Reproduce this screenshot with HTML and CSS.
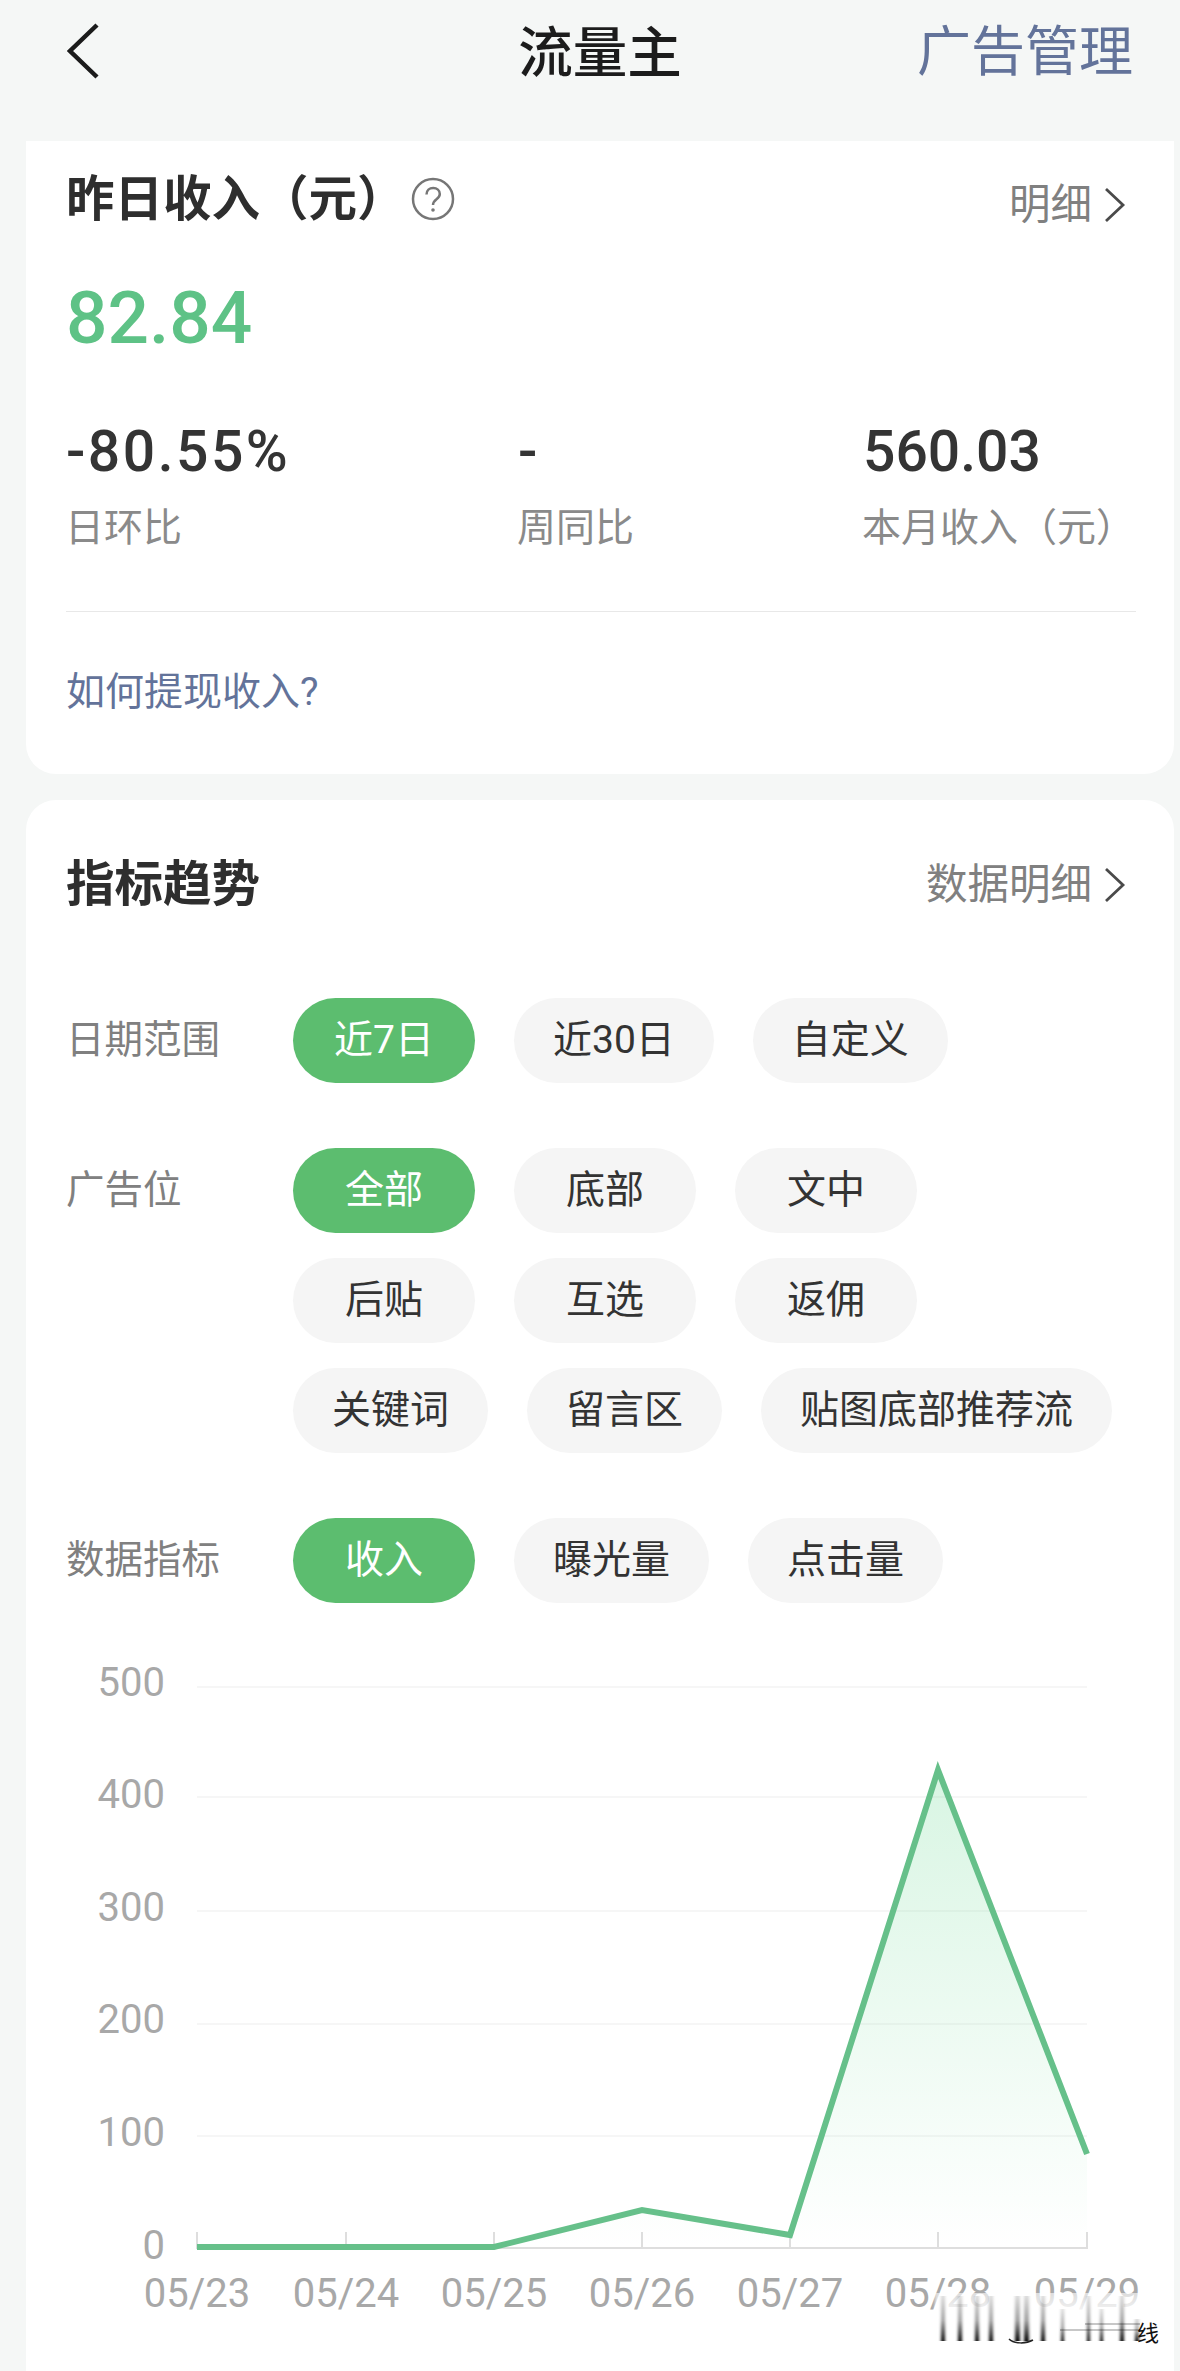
FILE: index.html
```html
<!DOCTYPE html>
<html lang="zh-CN">
<head>
<meta charset="utf-8">
<title>流量主</title>
<link rel="stylesheet" href="styles.css">
</head>
<body>
<header class="topbar">
  <svg class="back" viewBox="0 0 34 58" aria-hidden="true"><path d="M30 3 3 29l27 26"/></svg>
  <h1 class="title">流量主</h1>
  <a class="manage">广告管理</a>
</header>

<section class="card card-income">
  <div class="head-row">
    <div class="head-left">
      <h2 class="heading">昨日收入（元）</h2>
      <svg class="help" viewBox="0 0 44 44" aria-hidden="true">
        <circle cx="22" cy="22" r="20"/>
        <path d="M15.5 17.5c0-4 3-6.5 6.700-6.500s6.600 2.500 6.600 6c0 5.500-6.800 5-6.800 11"/>
        <circle class="dot" cx="22" cy="33" r="1.800"/>
      </svg>
    </div>
    <a class="more more-low">明细<svg class="chev" viewBox="0 0 22 36" aria-hidden="true"><path d="M2 2l17 16L2 34"/></svg></a>
  </div>
  <div class="amount">82.84</div>
  <div class="stats">
    <div class="stat"><div class="stat-num stat-wide">-80.55%</div><div class="stat-label">日环比</div></div>
    <div class="stat"><div class="stat-num">-</div><div class="stat-label">周同比</div></div>
    <div class="stat"><div class="stat-num">560.03</div><div class="stat-label">本月收入（元）</div></div>
  </div>
  <hr class="divider">
  <a class="link">如何提现收入?</a>
</section>

<section class="card card-trend">
  <div class="trend-top">
    <div class="head-row">
      <h2 class="heading">指标趋势</h2>
      <a class="more">数据明细<svg class="chev" viewBox="0 0 22 36" aria-hidden="true"><path d="M2 2l17 16L2 34"/></svg></a>
    </div>
    <div class="filters">
      <div class="filter">
        <div class="filter-label">日期范围</div>
        <div class="pills"><span class="pill on">近7日</span><span class="pill">近30日</span><span class="pill">自定义</span></div>
      </div>
      <div class="filter">
        <div class="filter-label">广告位</div>
        <div class="pills"><span class="pill on">全部</span><span class="pill">底部</span><span class="pill">文中</span><span class="pill">后贴</span><span class="pill">互选</span><span class="pill">返佣</span><span class="pill">关键词</span><span class="pill">留言区</span><span class="pill">贴图底部推荐流</span></div>
      </div>
      <div class="filter">
        <div class="filter-label">数据指标</div>
        <div class="pills"><span class="pill on">收入</span><span class="pill">曝光量</span><span class="pill">点击量</span></div>
      </div>
    </div>
  </div>

  <svg class="chart" viewBox="26 1650 1148 721">
    <defs>
      <linearGradient id="area" x1="0" y1="1771" x2="0" y2="2249" gradientUnits="userSpaceOnUse">
        <stop offset="0" stop-color="#5ed68a" stop-opacity=".24"/>
        <stop offset="1" stop-color="#5ed68a" stop-opacity="0"/>
      </linearGradient>
      <linearGradient id="smear" x1="0" y1="0" x2="0" y2="1">
        <stop offset="0" stop-color="#000" stop-opacity=".14"/>
        <stop offset=".55" stop-color="#000" stop-opacity=".38"/>
        <stop offset="1" stop-color="#000" stop-opacity="1"/>
      </linearGradient>
      <linearGradient id="fade" x1="0" y1="0" x2="0" y2="1">
        <stop offset="0" stop-color="#fff" stop-opacity=".6"/>
        <stop offset="1" stop-color="#fff" stop-opacity=".95"/>
      </linearGradient>
      <filter id="soft" x="-50%" y="-10%" width="200%" height="120%"><feGaussianBlur stdDeviation="1.600 .6"/></filter>
    </defs>
    <g class="grid">
      <line x1="197" y1="1688" x2="1087" y2="1688"/>
      <line x1="197" y1="1798" x2="1087" y2="1798"/>
      <line x1="197" y1="1912" x2="1087" y2="1912"/>
      <line x1="197" y1="2025" x2="1087" y2="2025"/>
      <line x1="197" y1="2137" x2="1087" y2="2137"/>
    </g>
    <path class="axis" d="M197 2233v16H1087v-16M346 2233v16M494 2233v16M642 2233v16M790 2233v16M938 2233v16"/>
    <g class="y-labels">
      <text x="165" y="1697">500</text>
      <text x="165" y="1809">400</text>
      <text x="165" y="1922">300</text>
      <text x="165" y="2034">200</text>
      <text x="165" y="2147">100</text>
      <text x="165" y="2260">0</text>
    </g>
    <g class="x-labels">
      <text x="197" y="2308">05/23</text>
      <text x="346" y="2308">05/24</text>
      <text x="494" y="2308">05/25</text>
      <text x="642" y="2308">05/26</text>
      <text x="790" y="2308">05/27</text>
      <text x="938" y="2308">05/28</text>
      <text x="1087" y="2308">05/29</text>
    </g>
    <path fill="url(#area)" d="M197 2248H494L642 2211 790 2236 938 1771 1087 2155V2249H197Z"/>
    <path class="line" d="M197 2248H494L642 2211 790 2236 938 1771 1087 2155"/>
    <rect x="935" y="2294" width="208" height="24" fill="url(#fade)" filter="url(#soft)"/>
    <rect x="935" y="2316" width="208" height="34" fill="#fff"/>
    <g fill="url(#smear)" filter="url(#soft)">
      <rect x="941" y="2297" width="4" height="45"/>
      <rect x="958" y="2297" width="4" height="45"/>
      <rect x="975" y="2297" width="4" height="45"/>
      <rect x="989" y="2297" width="4" height="45"/>
      <rect x="1015" y="2297" width="5" height="45"/>
      <rect x="1024" y="2297" width="5" height="45"/>
      <rect x="1041" y="2297" width="4" height="45"/>
      <rect x="1061" y="2310" width="3" height="32"/>
      <rect x="1087" y="2297" width="3" height="45"/>
      <rect x="1100" y="2310" width="3" height="32"/>
      <rect x="1120" y="2297" width="4" height="45"/>
      <rect x="1135" y="2320" width="4" height="22"/>
    </g>
    <path class="wm-band" d="M1085 2325h55M1060 2331h80"/>
    <path class="wm-at" d="M1009 2340c5 5 17 5 24 1"/>
    <text class="wm-char" x="1137" y="2342">线</text>
  </svg>
</section>
</body>
</html>
```
FILE: styles.css
```css
* { box-sizing: border-box; }

html, body {
  margin: 0;
  padding: 0;
}

body {
  width: 1180px;
  height: 2371px;
  overflow: hidden;
  background: #f5f7f6;
  color: #333;
  font-family: Roboto, "Noto Sans CJK SC", sans-serif;
}

a { display: block; }

.topbar {
  height: 141px;
  padding: 0 47px 36px 67px;
  display: grid;
  grid-template-columns: 1fr auto 1fr;
  align-items: center;
}

.back {
  width: 34px;
  height: 58px;
  margin-bottom: 4px;
  fill: none;
  stroke: #1b1b1b;
  stroke-width: 4.500;
}

.title {
  margin: 0;
  font-size: 54.500px;
  line-height: 60px;
  font-weight: 500;
  color: #1c1c1c;
}

.manage {
  justify-self: end;
  font-size: 54px;
  line-height: 60px;
  color: #63739a;
}

.card {
  margin: 0 6px 0 26px;
  background: #fff;
}

.card-income {
  padding: 29px 38px 57px 40px;
  border-radius: 0 0 30px 30px;
}

.card-trend {
  margin-top: 26px;
  height: 1571px;
  border-radius: 30px 30px 0 0;
}

.trend-top {
  padding: 55px 38px 0 40px;
}

.head-row {
  height: 60px;
  display: flex;
  align-items: center;
  justify-content: space-between;
}

.head-left {
  display: flex;
  align-items: center;
}

.heading {
  margin: 0;
  font-size: 48.500px;
  line-height: 60px;
  font-weight: 700;
  color: #2e2e2e;
}

.help {
  width: 44px;
  height: 44px;
  margin: -2px 0 0 5px;
  fill: none;
  stroke: #767676;
  stroke-width: 2.500;
}

.help .dot {
  fill: #767676;
  stroke: none;
}

.more {
  display: flex;
  align-items: center;
  gap: 12px;
  padding-right: 10px;
  font-size: 41.500px;
  line-height: 60px;
  color: #808080;
}

.more-low {
  margin-top: 10px;
}

.chev {
  width: 22px;
  height: 36px;
  fill: none;
  stroke: #4a4a4a;
  stroke-width: 2.800;
}

.amount {
  margin-top: 48px;
  font-size: 73px;
  line-height: 80px;
  font-weight: 500;
  color: #5ec286;
}

.stats {
  margin-top: 64px;
  display: grid;
  grid-template-columns: 452px 345px 1fr;
}

.stat-num {
  font-size: 57px;
  line-height: 60px;
  font-weight: 500;
  color: #343434;
}

.stat-wide {
  letter-spacing: 2.500px;
}

.stat-label {
  margin-top: 21px;
  margin-left: -1px;
  font-size: 39px;
  line-height: 50px;
  color: #8a8a8a;
  white-space: nowrap;
}

.divider {
  margin: 58px 0 0;
  height: 1px;
  border: 0;
  background: #e8e8e8;
}

.link {
  margin-top: 55px;
  font-size: 39px;
  line-height: 50px;
  color: #63739a;
}

.filters {
  margin-top: 83px;
  display: flex;
  flex-direction: column;
  gap: 65px 0;
}

.filter {
  display: flex;
  align-items: flex-start;
}

.filter-label {
  width: 227px;
  flex: none;
  font-size: 38.500px;
  line-height: 83px;
  color: #808080;
}

.pills {
  width: 830px;
  display: flex;
  flex-wrap: wrap;
  gap: 25px 39px;
}

.pill {
  min-width: 182px;
  height: 85px;
  padding: 0 39px;
  border-radius: 42.500px;
  background: #f5f5f5;
  color: #333;
  font-size: 39px;
  line-height: 85px;
  text-align: center;
  white-space: nowrap;
}

.pill.on {
  background: #5cbd6f;
  color: #fff;
}

.chart {
  display: block;
  margin-top: 46px;
  width: 1148px;
  height: 721px;
}

.grid line {
  stroke: #f6f6f6;
  stroke-width: 2;
}

.axis {
  fill: none;
  stroke: #dedede;
  stroke-width: 2;
}

.y-labels text,
.x-labels text {
  font-family: Roboto, sans-serif;
  font-size: 40px;
  fill: #a8a8a8;
}

.y-labels text { text-anchor: end; }
.x-labels text { text-anchor: middle; }

.line {
  fill: none;
  stroke: #66c08a;
  stroke-width: 6;
  stroke-linejoin: miter;
}

.wm-band {
  fill: none;
  stroke: #000;
  stroke-opacity: .22;
  stroke-width: 2;
}

.wm-at {
  fill: none;
  stroke: #222;
  stroke-width: 1.500;
}

.wm-char {
  font-family: "Noto Sans CJK SC", sans-serif;
  font-size: 22px;
  fill: #111;
}
```
